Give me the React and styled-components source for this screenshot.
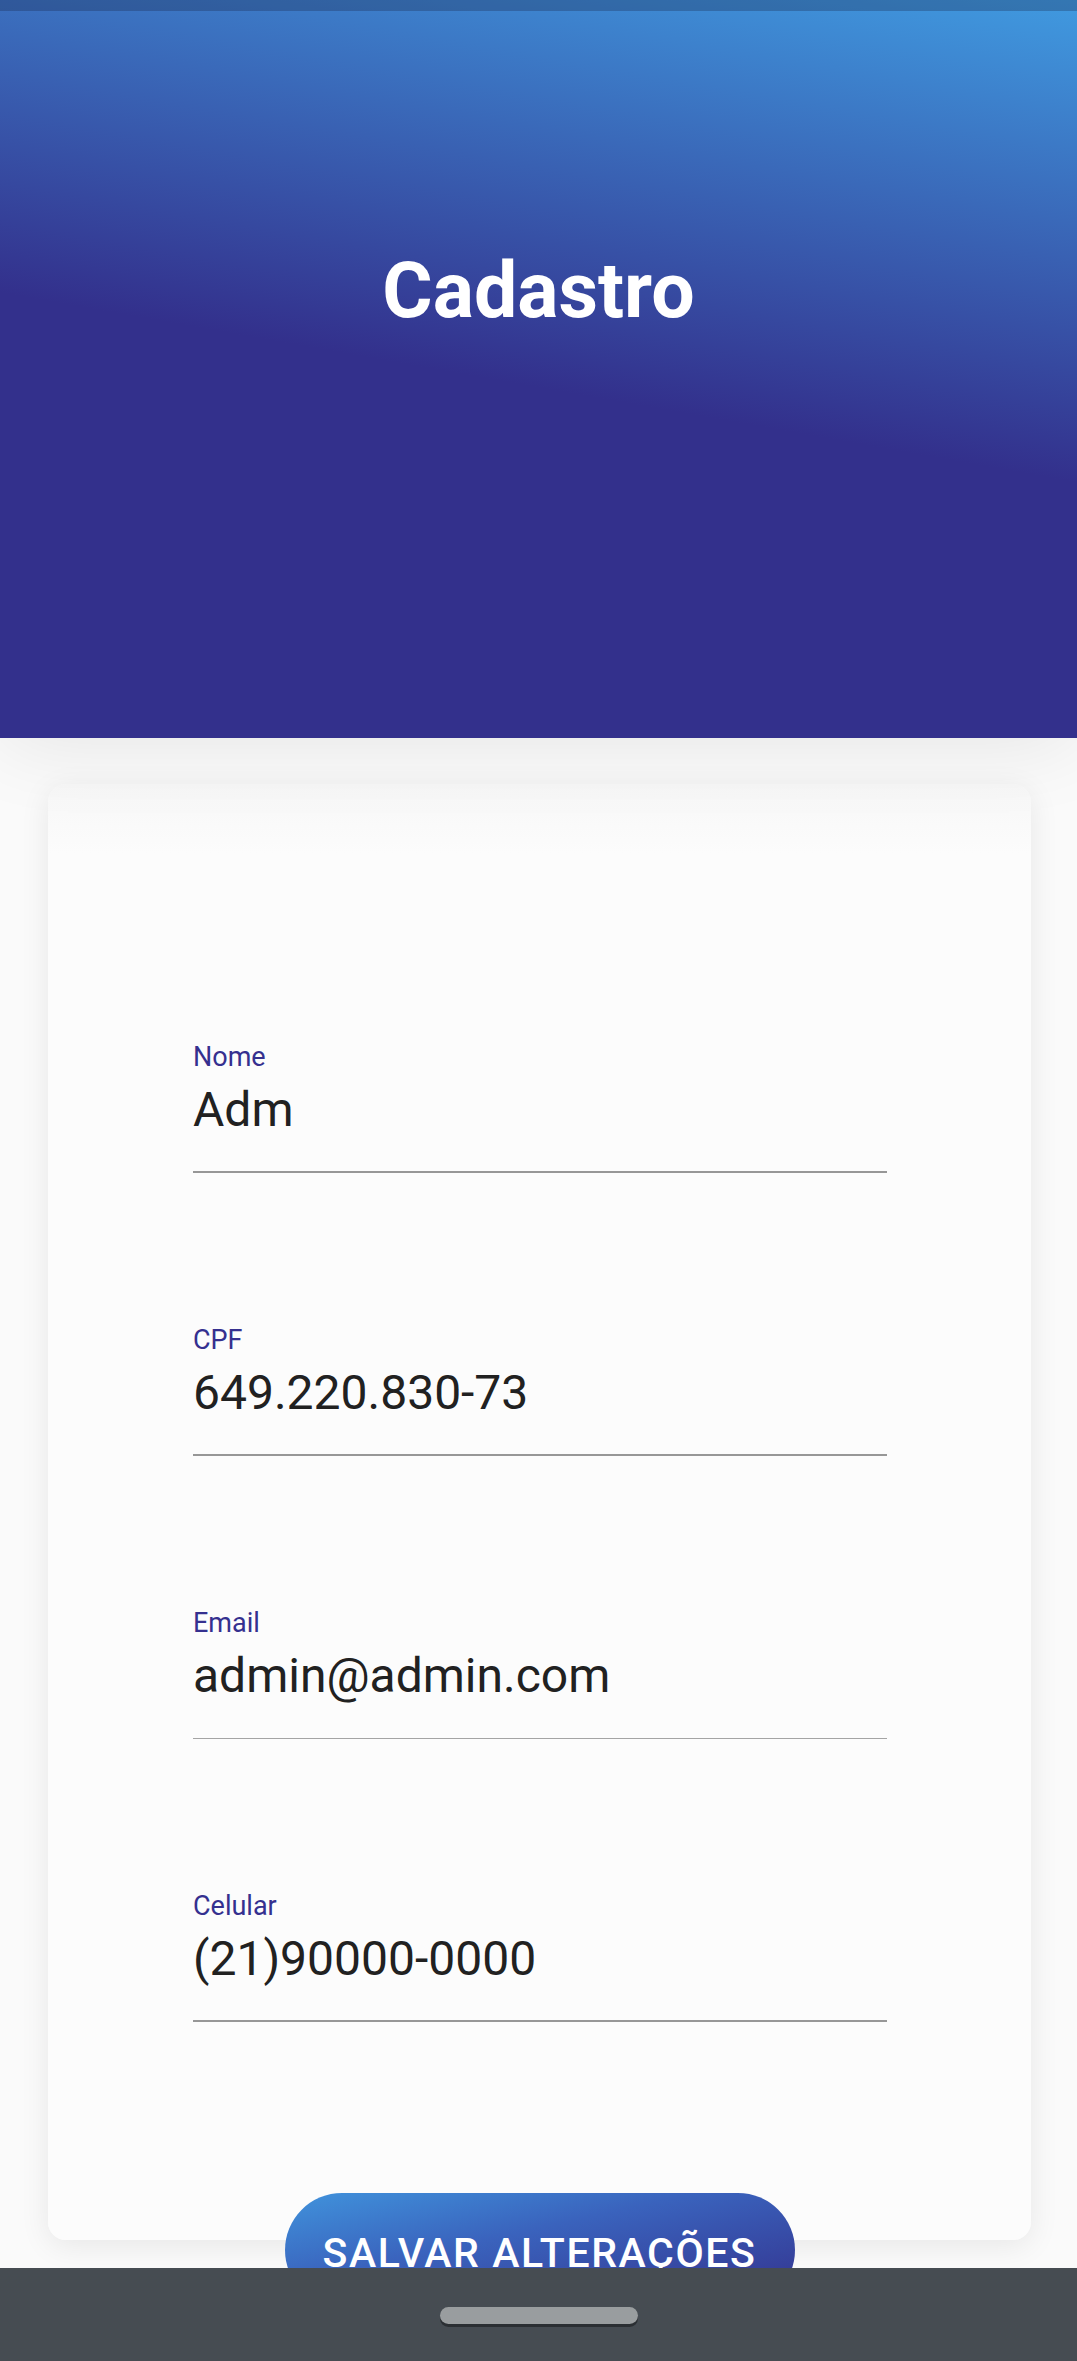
import React from 'react'
import styled, { createGlobalStyle } from 'styled-components'

const GlobalStyle = createGlobalStyle`
    html, body {
        margin: 0;
        padding: 0;
        background: #fafafa;
        font-family: Roboto, "Noto Sans", "Liberation Sans", sans-serif;
    }
`

const Screen = styled.div`
    min-height: 2361px;
    display: flex;
    flex-direction: column;
`

const Header = styled.header`
    position: relative;
    z-index: 2;
    height: 738px;
    display: flex;
    flex-direction: column;
    background: linear-gradient(190deg, #409ae0 0%, #33308c 52%, #33308c 100%);
    box-shadow: 0 4px 80px rgba(0, 0, 0, 0.09);
`

const StatusBar = styled.div`
    height: 11px;
    background: rgba(20, 30, 60, 0.28);
`

const Title = styled.h1`
    margin: 235px 0 0;
    text-align: center;
    color: #fff;
    font-size: 77px;
    line-height: 90px;
    font-weight: 700;
`

const Content = styled.main`
    padding: 46px 46px 0 48px;
    display: flex;
    flex-direction: column;
    align-items: center;
`

const Card = styled.section`
    position: relative;
    z-index: 1;
    align-self: stretch;
    border-radius: 18px;
    padding: 257px 144px 218px 145px;
    display: flex;
    flex-direction: column;
    gap: 151px;
    background: linear-gradient(#f7f7f7 0px, #fcfcfc 70px, #fcfcfc 100%);
    box-shadow: 0 6px 30px rgba(0, 0, 0, 0.08);
`

const Field = styled.div`
    display: flex;
    flex-direction: column;
    border-bottom: ${props => (props.thin ? '1px solid #a4a4a4' : '2px solid #979797')};
    padding-bottom: ${props => (props.thin ? '34px' : '33px')};
`

const Label = styled.span`
    color: #35308f;
    font-size: 27px;
    line-height: 32px;
`

const Value = styled.span`
    margin-top: 9px;
    color: #212121;
    font-size: 48px;
    line-height: 56px;
`

const SaveButton = styled.button`
    position: relative;
    z-index: 3;
    margin-top: -47px;
    width: 510px;
    height: 114px;
    padding: 5px 0 0;
    border: none;
    border-radius: 57px;
    background: linear-gradient(to bottom right, #4093dc 0%, #3a63bd 40%, #33308c 100%);
    color: #fff;
    font-family: Roboto, "Noto Sans", sans-serif;
    font-size: 41px;
    font-weight: 500;
    letter-spacing: 1.6px;
    text-transform: uppercase;
    cursor: pointer;
`

const NavBar = styled.nav`
    position: fixed;
    z-index: 10;
    left: 0;
    right: 0;
    bottom: 0;
    height: 93px;
    background: #464c52;
    display: flex;
    justify-content: center;
    padding-top: 39px;
    box-sizing: border-box;
`

const HomePill = styled.div`
    width: 198px;
    height: 17px;
    border-radius: 9px;
    background: #999d9f;
    box-shadow: 0 3px 0 #2b2f33;
`

const fields = [
    { label: 'Nome', value: 'Adm' },
    { label: 'CPF', value: '649.220.830-73' },
    { label: 'Email', value: 'admin@admin.com', thin: true },
    { label: 'Celular', value: '(21)90000-0000' },
]

const App = () => (
    <>
        <GlobalStyle/>
        <Screen>
            <Header>
                <StatusBar/>
                <Title>Cadastro</Title>
            </Header>
            <Content>
                <Card>
                    {fields.map(field => (
                        <Field key={field.label} thin={field.thin}>
                            <Label>{field.label}</Label>
                            <Value>{field.value}</Value>
                        </Field>
                    ))}
                </Card>
                <SaveButton>Salvar alterações</SaveButton>
            </Content>
        </Screen>
        <NavBar>
            <HomePill/>
        </NavBar>
    </>
)

export default App
